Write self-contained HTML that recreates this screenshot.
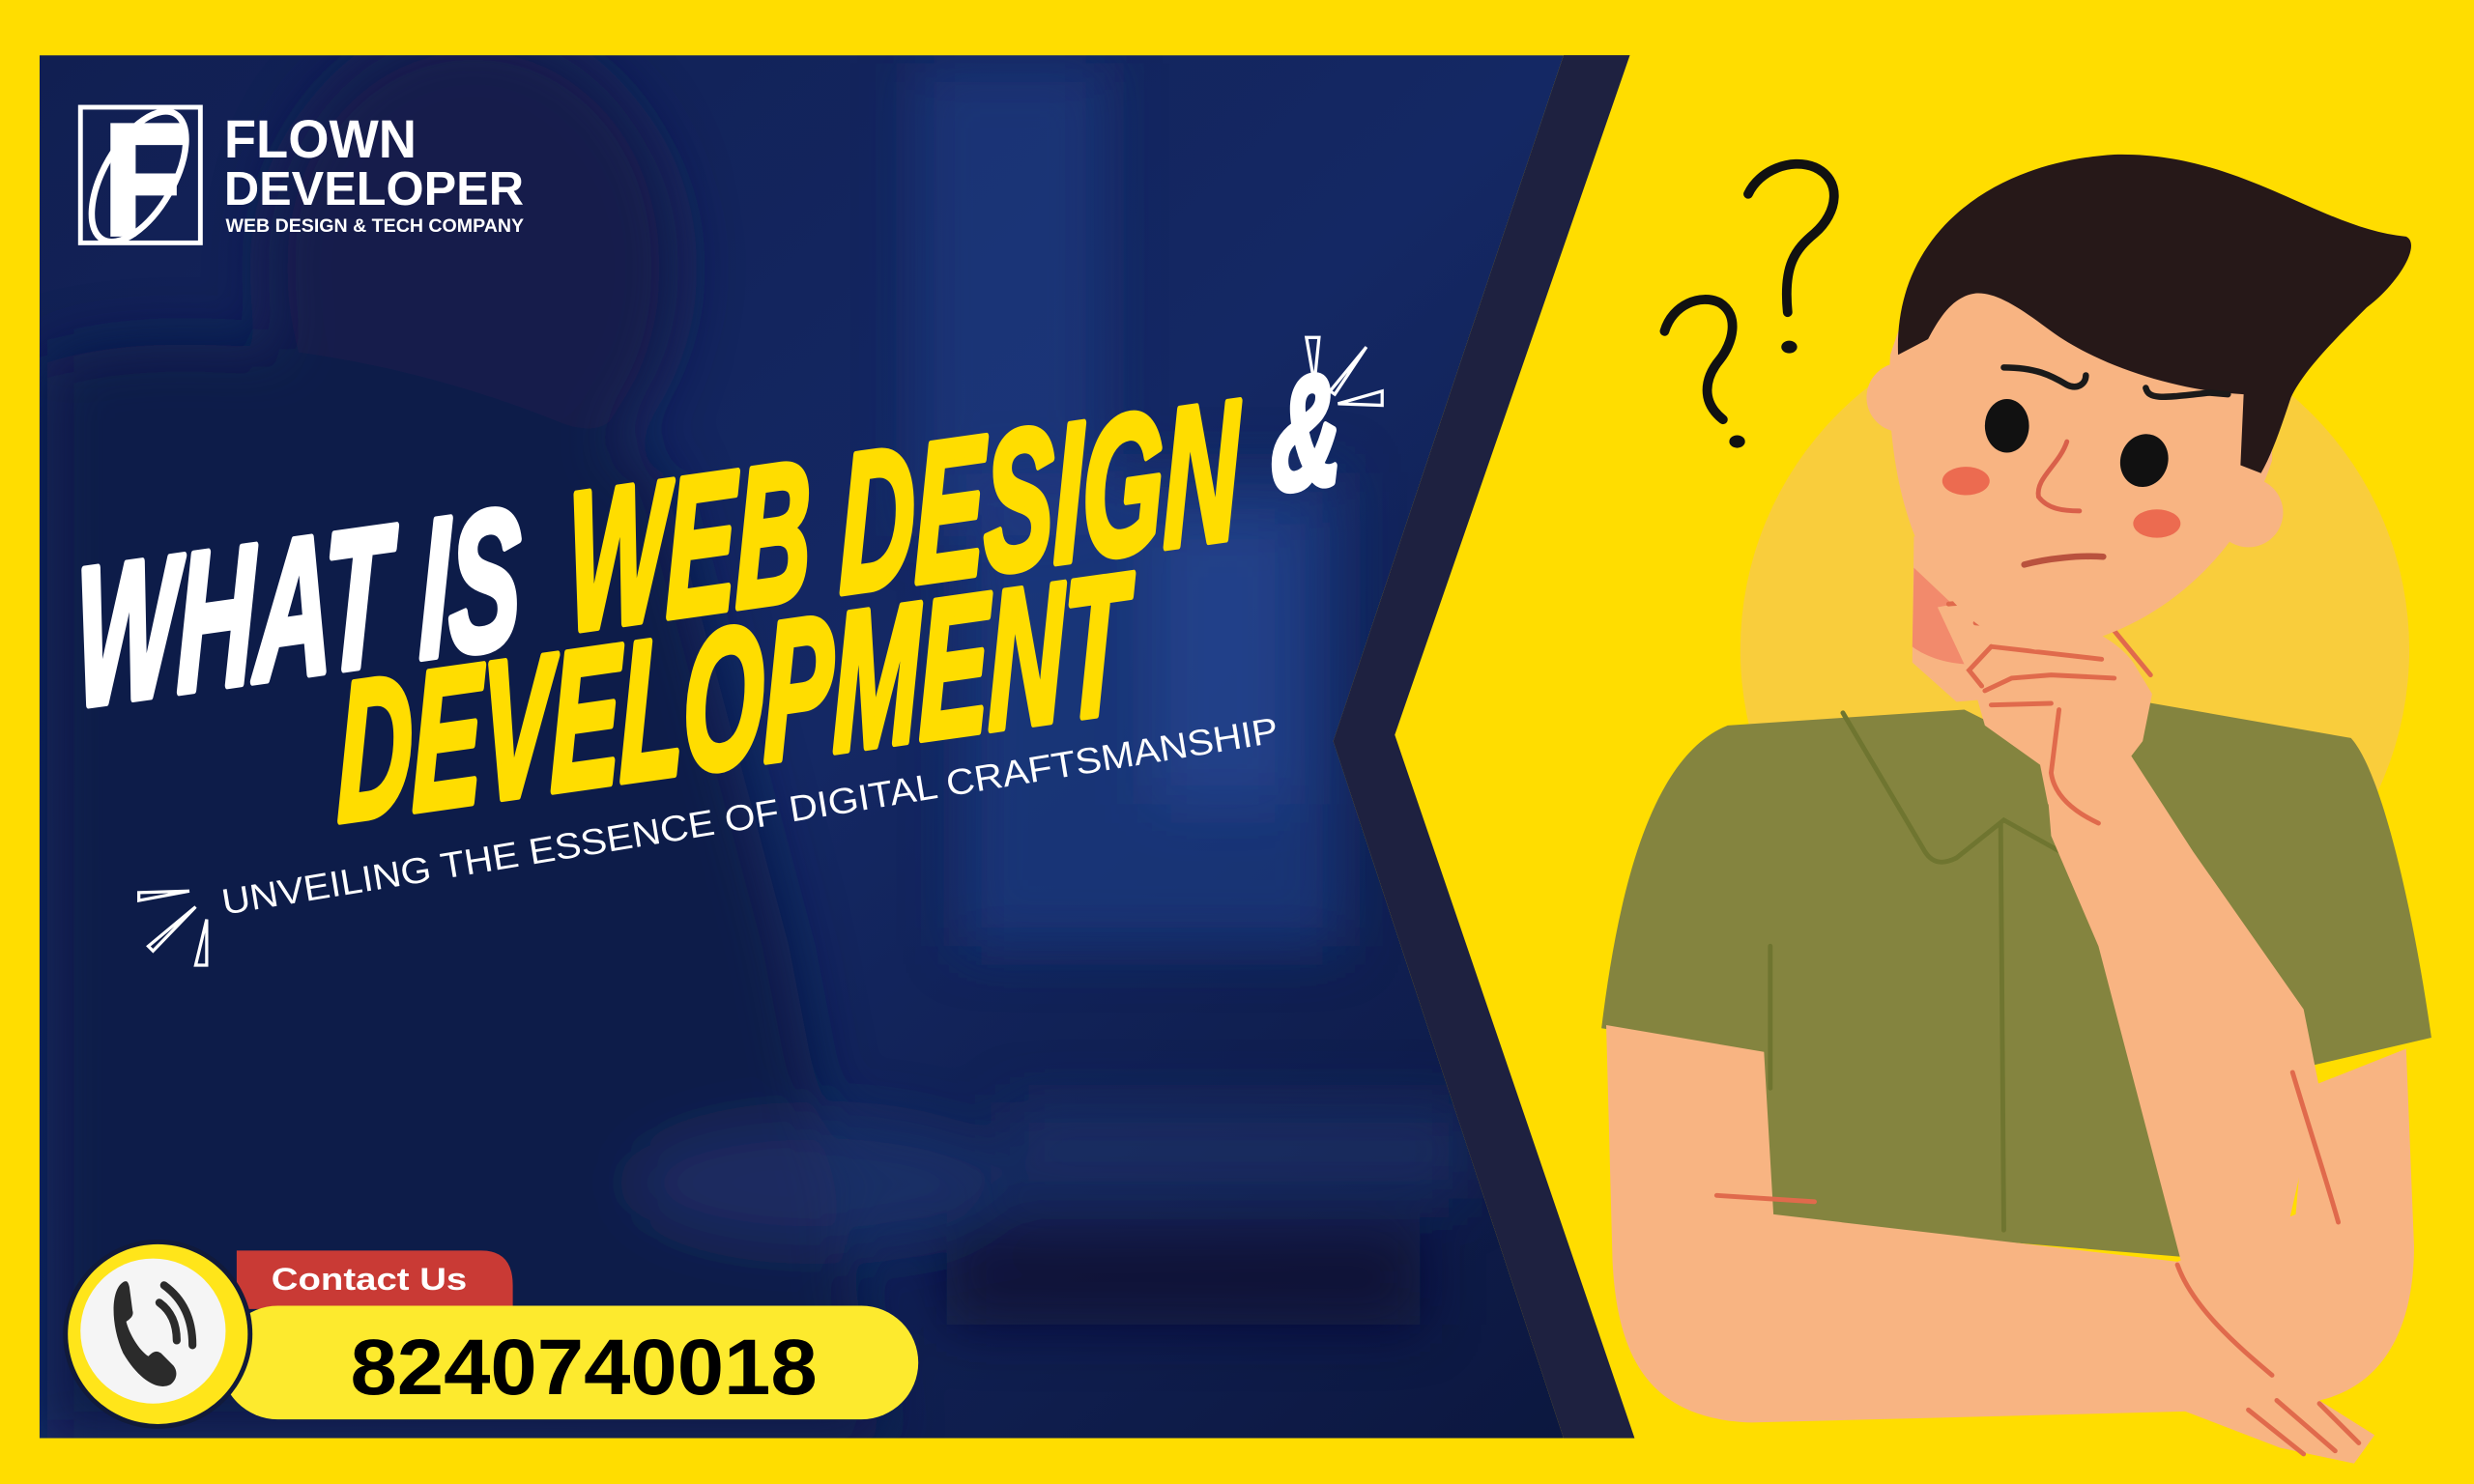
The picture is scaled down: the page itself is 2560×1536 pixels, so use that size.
<!DOCTYPE html>
<html><head><meta charset="utf-8"><style>
html,body{margin:0;padding:0;background:#FFDD00;}
svg{display:block;}
</style></head><body>
<svg width="2560" height="1536" viewBox="0 0 1568 941" preserveAspectRatio="none" xmlns="http://www.w3.org/2000/svg">
<defs>
<linearGradient id="bg" x1="0" y1="0" x2="1" y2="1">
<stop offset="0" stop-color="#111f52"/><stop offset="0.5" stop-color="#142864"/><stop offset="1" stop-color="#0c173f"/>
</linearGradient>
<filter id="bl" x="-50%" y="-50%" width="200%" height="200%"><feGaussianBlur stdDeviation="18"/></filter>
<clipPath id="ph"><path d="M25,35 L991,35 L845,470 L991,912 L25,912 Z"/></clipPath>
</defs>
<rect width="1568" height="941" fill="#FFDD00"/>
<!-- photo panel -->
<g clip-path="url(#ph)">
<rect x="25" y="35" width="970" height="880" fill="url(#bg)"/>
<g filter="url(#bl)">
<rect x="580" y="40" width="120" height="300" fill="#24428e" opacity="0.5"/>
<rect x="610" y="300" width="240" height="300" fill="#1d3a82" opacity="0.7"/>
<rect x="730" y="330" width="90" height="180" fill="#2c4c9c" opacity="0.5"/>
<ellipse cx="300" cy="170" rx="130" ry="150" fill="#121f4c"/>
<path d="M30,230 C120,200 300,230 420,300 L500,600 L560,912 L30,912 Z" fill="#101c4a"/>
<ellipse cx="520" cy="750" rx="120" ry="40" fill="#223570" opacity="0.6"/>
<rect x="640" y="700" width="290" height="60" fill="#223570" opacity="0.5"/>
<rect x="600" y="780" width="300" height="60" fill="#0a1434" opacity="0.8"/>
</g>
</g>
<path d="M991,35 L1033,35 L884,466 L1036,912 L991,912 L845,470 Z" fill="#1e2140"/>
<rect x="0" y="912" width="1568" height="29" fill="#FFDD00"/>

<!-- logo -->
<rect x="51" y="68" width="76" height="86" stroke-width="3" fill="none" stroke="#fff"/>
<path d="M70,78 L118,78 L118,92 L86,92 L86,110 L112,110 L112,124 L86,124 L86,150 L70,150 Z" fill="#fff"/>
<ellipse cx="88" cy="112" rx="22" ry="46" transform="rotate(30 88 112)" fill="none" stroke="#fff" stroke-width="4"/>
<text x="142" y="100" font-family="Liberation Sans" font-weight="bold" font-size="34" fill="#fff" textLength="122" lengthAdjust="spacingAndGlyphs">FLOWN</text>
<text x="142" y="130" font-family="Liberation Sans" font-weight="bold" font-size="30" fill="#fff" textLength="190" lengthAdjust="spacingAndGlyphs">DEVELOPER</text>
<text x="143" y="147" font-family="Liberation Sans" font-weight="bold" font-size="12" fill="#fff" textLength="189" lengthAdjust="spacingAndGlyphs">WEB DESIGN &amp; TECH COMPANY</text>

<!-- headline -->
<g transform="translate(48,448) skewY(-8)" font-family="Liberation Sans" font-weight="bold" font-style="italic" stroke-width="5" stroke-linejoin="round">
<text x="0" y="0" font-size="125" fill="#fff" stroke="#fff" textLength="282" lengthAdjust="spacingAndGlyphs">WHAT IS</text>
<text x="312" y="-4" font-size="125" fill="#FFDD00" stroke="#FFDD00" textLength="425" lengthAdjust="spacingAndGlyphs">WEB DESIGN</text>
<text x="758" y="-30" font-size="100" fill="#fff" stroke="#fff" textLength="44" lengthAdjust="spacingAndGlyphs">&amp;</text>
<text x="166" y="96" font-size="125" fill="#FFDD00" stroke="#FFDD00" textLength="500" lengthAdjust="spacingAndGlyphs">DEVELOPMENT</text>
</g>
<text transform="translate(142,580) rotate(-9.3)" font-family="Liberation Sans" font-size="23" fill="#fff" textLength="678" lengthAdjust="spacingAndGlyphs">UNVEILING THE ESSENCE OF DIGITAL CRAFTSMANSHIP</text>
<!-- sparkles -->
<g fill="none" stroke="#fff" stroke-width="2">
<path d="M828,214 L833,243 L836,214 Z"/>
<path d="M866,220 L843,248 L846,250 Z"/>
<path d="M876,248 L848,256 L876,257 Z"/>
<path d="M88,566 L120,565 L88,571 Z"/>
<path d="M124,575 L94,600 L97,603 Z"/>
<path d="M131,583 L124,612 L131,612 Z"/>
</g>

<!-- contact -->
<path d="M150,793 L305,793 Q325,793 325,815 L325,830 L150,830 Z" fill="#C93A35"/>
<text x="172" y="818" font-family="Liberation Sans" font-weight="bold" font-size="20" fill="#fff" textLength="124" lengthAdjust="spacingAndGlyphs">Contact Us</text>
<rect x="140" y="828" width="442" height="72" rx="36" fill="#FDEA2E"/>
<text x="222" y="884" font-family="Liberation Sans" font-weight="bold" font-size="50" fill="#000" textLength="296" lengthAdjust="spacingAndGlyphs">8240740018</text>
<circle cx="100" cy="846" r="60" fill="#111a3a"/>
<circle cx="100" cy="846" r="57" fill="#FFE51A"/>
<circle cx="97" cy="844" r="46" fill="#f5f5f5"/>
<path d="M78,813 C70,818 70,840 78,858 C88,875 100,882 108,878 C112,875 113,870 110,866 L102,858 C99,856 97,857 94,860 C88,856 82,846 80,838 C83,836 85,834 84,831 L82,816 C81,812 80,812 78,813 Z" fill="#2b2b2b"/>
<path d="M101,826 Q112,834 112,850" fill="none" stroke="#2b2b2b" stroke-width="5" stroke-linecap="round"/>
<path d="M104,815 Q122,828 122,853" fill="none" stroke="#2b2b2b" stroke-width="5" stroke-linecap="round"/>

<!-- person -->
<circle cx="1315" cy="412" r="212" fill="#F9CD3C"/>
<path d="M1213,340 L1212,420 L1240,445 L1300,440 L1305,380 Z" fill="#F8B482"/>
<path d="M1213,360 L1212,410 C1225,420 1250,425 1270,418 L1250,395 Z" fill="#F28A6C"/>
<path d="M1015,652 C1025,570 1045,480 1095,460 L1245,450 L1295,475 L1330,440 L1490,468 C1510,490 1530,580 1541,658 L1455,678 L1420,800 L1120,775 L1118,668 Z" fill="#84843F"/>
<g fill="none" stroke="#6f7530" stroke-width="3" stroke-linecap="round">
<path d="M1168,452 L1220,540 C1225,548 1232,548 1240,544 L1270,520 L1320,548"/>
<path d="M1268,523 L1270,780"/>
<path d="M1122,600 L1122,690"/>
</g>
<path d="M1018,650 L1118,667 L1124,770 L1380,800 L1455,770 L1462,690 L1525,665 L1530,790 C1530,850 1505,880 1470,888 L1505,910 L1492,928 L1445,918 L1385,895 L1110,902 C1045,900 1025,860 1022,800 Z" fill="#F8B482"/>
<path d="M1295,470 L1335,455 L1390,540 L1460,640 L1470,690 L1445,800 L1385,810 L1330,600 L1300,530 Z" fill="#F8B482"/>
<path d="M1228,385 C1262,378 1330,390 1352,420 L1364,440 L1358,470 L1335,500 L1298,510 L1293,485 L1258,460 L1250,432 Z" fill="#F8B482"/>
<g fill="none" stroke="#E06A4C" stroke-width="3" stroke-linecap="round">
<path d="M1235,383 C1262,380 1320,388 1340,400 L1363,428"/>
<path d="M1252,395 L1310,400"/>
<path d="M1262,410 L1332,418"/>
<path d="M1262,410 L1248,425 L1256,435"/>
<path d="M1258,438 L1275,430 L1300,428 L1340,430"/>
<path d="M1262,447 L1300,446"/>
<path d="M1305,450 L1300,490 C1302,505 1315,515 1330,522"/>
<path d="M1380,802 C1390,830 1420,855 1440,872"/>
<path d="M1453,680 C1465,720 1475,750 1482,775"/>
<path d="M1088,758 L1150,762"/>
<path d="M1425,894 L1460,922 M1443,888 L1480,920 M1470,890 L1495,915"/>
</g>
<circle cx="1205" cy="252" r="22" fill="#F8B482"/>
<circle cx="1425" cy="325" r="22" fill="#F8B482"/>
<path d="M1198,225 C1193,320 1225,400 1290,412 C1360,408 1420,355 1440,292 L1440,200 L1300,160 L1210,190 Z" fill="#F8B482"/>
<path d="M1203,225 C1200,150 1260,103 1340,98 C1420,96 1470,145 1525,150 C1535,155 1520,180 1500,195 C1480,215 1460,235 1452,252 C1446,270 1440,288 1433,300 L1420,295 L1422,250 C1380,248 1330,232 1300,210 C1280,195 1265,185 1252,186 C1238,188 1230,200 1222,215 Z" fill="#261818"/>
<ellipse cx="1272" cy="270" rx="14" ry="17" fill="#111"/>
<ellipse cx="1359" cy="292" rx="15" ry="17" transform="rotate(20 1359 292)" fill="#111"/>
<g fill="none" stroke="#1a1a1a" stroke-width="4" stroke-linecap="round">
<path d="M1270,233 C1290,233 1300,238 1310,244 C1316,247 1322,244 1322,238"/>
<path d="M1360,246 C1362,254 1372,252 1400,249 L1412,250"/>
</g>
<ellipse cx="1246" cy="305" rx="15" ry="9" fill="#EC6B50"/>
<ellipse cx="1367" cy="332" rx="15" ry="9" fill="#EC6B50"/>
<path d="M1310,280 C1305,295 1290,303 1292,315 C1298,323 1308,324 1318,324" fill="none" stroke="#D9604A" stroke-width="3" stroke-linecap="round"/>
<path d="M1283,358 C1298,354 1318,352 1333,353" fill="none" stroke="#B9523E" stroke-width="4" stroke-linecap="round"/>
<!-- question marks -->
<g fill="none" stroke="#111" stroke-width="6" stroke-linecap="round">
<path d="M1108,123 C1115,108 1135,100 1150,106 C1168,114 1165,135 1150,148 C1138,158 1130,168 1133,198"/>
<path d="M1055,210 C1060,193 1078,186 1090,192 C1103,200 1098,218 1090,228 C1080,240 1078,255 1092,266"/>
</g>
<ellipse cx="1134" cy="220" rx="5" ry="4" fill="#111"/>
<ellipse cx="1101" cy="280" rx="5" ry="4" fill="#111"/>
</svg>
</body></html>
